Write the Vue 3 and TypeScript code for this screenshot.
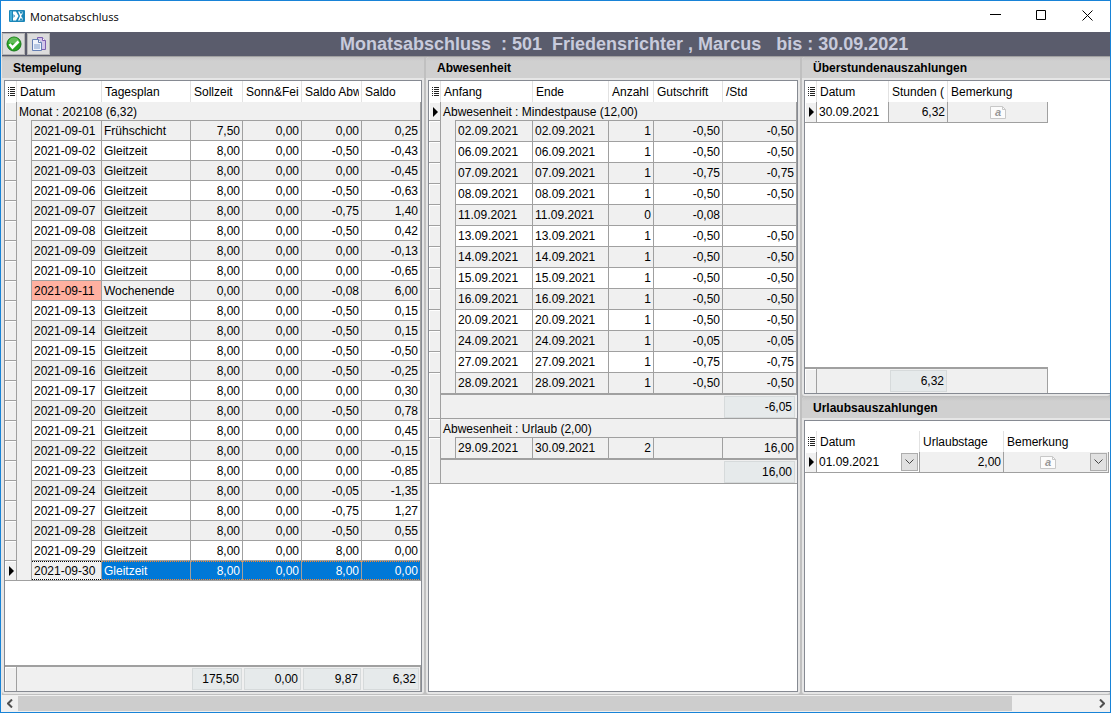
<script setup lang="ts">
import { ref } from 'vue'

interface StampRow {
  date: string
  plan: string
  target: string
  sunday: string
  absence: string
  balance: string
}

interface AbsenceRow {
  from: string
  to: string
  count: string
  credit: string
  hours: string
}

interface AbsenceGroup {
  title: string
  rows: AbsenceRow[]
  sum: string
}

const stamp = (date: string, absence: string, balance: string, plan = 'Gleitzeit', target = '8,00'): StampRow => ({
  date: `2021-09-${date}`, plan, target, sunday: '0,00', absence, balance,
})

const stamps: StampRow[] = [
  stamp('01', '0,00', '0,25', 'Frühschicht', '7,50'),
  stamp('02', '-0,50', '-0,43'),
  stamp('03', '0,00', '-0,45'),
  stamp('06', '-0,50', '-0,63'),
  stamp('07', '-0,75', '1,40'),
  stamp('08', '-0,50', '0,42'),
  stamp('09', '0,00', '-0,13'),
  stamp('10', '0,00', '-0,65'),
  stamp('11', '-0,08', '6,00', 'Wochenende', '0,00'),
  stamp('13', '-0,50', '0,15'),
  stamp('14', '-0,50', '0,15'),
  stamp('15', '-0,50', '-0,50'),
  stamp('16', '-0,50', '-0,25'),
  stamp('17', '0,00', '0,30'),
  stamp('20', '-0,50', '0,78'),
  stamp('21', '0,00', '0,45'),
  stamp('22', '0,00', '-0,15'),
  stamp('23', '0,00', '-0,85'),
  stamp('24', '-0,05', '-1,35'),
  stamp('27', '-0,75', '1,27'),
  stamp('28', '-0,50', '0,55'),
  stamp('29', '8,00', '0,00'),
  stamp('30', '8,00', '0,00'),
]
const selected = ref('2021-09-30')

const pause = (day: string, credit: string, hours = credit, count = '1'): AbsenceRow => ({
  from: `${day}.09.2021`, to: `${day}.09.2021`, count, credit, hours,
})

const groups: AbsenceGroup[] = [
  {
    title: 'Abwesenheit : Mindestpause (12,00)',
    rows: [
      pause('02', '-0,50'),
      pause('06', '-0,50'),
      pause('07', '-0,75'),
      pause('08', '-0,50'),
      pause('11', '-0,08', '', '0'),
      pause('13', '-0,50'),
      pause('14', '-0,50'),
      pause('15', '-0,50'),
      pause('16', '-0,50'),
      pause('20', '-0,50'),
      pause('24', '-0,05'),
      pause('27', '-0,75'),
      pause('28', '-0,50'),
    ],
    sum: '-6,05',
  },
  {
    title: 'Abwesenheit : Urlaub (2,00)',
    rows: [{ from: '29.09.2021', to: '30.09.2021', count: '2', credit: '', hours: '16,00' }],
    sum: '16,00',
  },
]

const payoutDate = ref('01.09.2021')
</script>

<template>
  <div class="window">
    <header class="titlebar">
      <svg class="app-icon" width="16" height="12" viewBox="0 0 16 12" aria-hidden="true">
        <rect width="16" height="12" rx="1" fill="#1a86b8" />
        <path d="M1 1h2v10H1z" fill="#45aed8" />
        <path d="M4 1.500h3L9.500 6 7 10.500H4z" fill="#fff" />
        <path d="M4.500 4L6 6 4.500 8z" fill="#1a86b8" />
        <path d="M9 1.500h4.500v2.500L12 6l1.500 2v2.500H9L11 6z" fill="#fff" />
        <path d="M10.500 1.500L12 4.500 13.500 1.500zM10.500 10.500L12 7.500l1.500 3z" fill="#1a86b8" />
      </svg>
      <span class="caption">Monatsabschluss</span>
      <div class="controls">
        <button type="button" aria-label="Minimieren">
          <svg width="11" height="11" viewBox="0 0 11 11"><path d="M0 4.500h11" stroke="#000" /></svg>
        </button>
        <button type="button" aria-label="Maximieren">
          <svg width="11" height="11" viewBox="0 0 11 11"><path d="M.5 .5h9v9h-9z" fill="none" stroke="#000" /></svg>
        </button>
        <button type="button" aria-label="Schließen">
          <svg width="11" height="11" viewBox="0 0 11 11"><path d="M.5 .5l10 10M10.500 .5l-10 10" stroke="#000" /></svg>
        </button>
      </div>
    </header>

    <div class="toolbar">
      <button type="button" aria-label="Bestätigen">
        <svg width="16" height="16" viewBox="0 0 16 16">
          <circle cx="8" cy="8" r="7" fill="#27a51f" stroke="#17791a" />
          <path d="M2.500 6.500a5.500 5 0 0 1 11 0q-5.500 2-11 0z" fill="#62bd58" />
          <path d="M3.500 8l3 3.500 6-6" fill="none" stroke="#fff" stroke-width="2.600" />
        </svg>
      </button>
      <button type="button" aria-label="Kopieren">
        <svg width="16" height="16" viewBox="0 0 16 16">
          <path d="M6.500 1.500h5l3 3v9h-8z" fill="#d3c6ea" stroke="#7d5fb0" />
          <path d="M11.500 1.500v3h3" fill="#fff" stroke="#7d5fb0" />
          <path d="M1.500 3.500h6l3 3v8h-9z" fill="#eef3fb" stroke="#6580b4" />
          <path d="M7.500 3.500v3h3" fill="#fff" stroke="#6580b4" />
          <path d="M3 8h6v5H3z" fill="#b6c8e4" />
        </svg>
      </button>
      <h1>Monatsabschluss&nbsp; : 501&nbsp; Friedensrichter , Marcus&nbsp;&nbsp; bis : 30.09.2021</h1>
    </div>

    <main class="workspace">
      <section class="panel">
        <h2>Stempelung</h2>
        <div class="box">
          <table class="grid stamps">
            <colgroup>
              <col class="w12" /><col class="w15" /><col class="w70" /><col class="w89" />
              <col class="w52" /><col class="w59" /><col class="w60" /><col />
            </colgroup>
            <thead>
              <tr>
                <th class="mark"><i class="list"></i></th>
                <th colspan="2">Datum</th>
                <th>Tagesplan</th>
                <th>Sollzeit</th>
                <th>Sonn&amp;Fei</th>
                <th><span class="clip">Saldo Abw</span></th>
                <th>Saldo</th>
              </tr>
            </thead>
            <tbody>
              <tr class="group">
                <td class="mark first"></td>
                <td colspan="7">Monat : 202108 (6,32)</td>
              </tr>
              <tr
                v-for="row in stamps"
                :key="row.date"
                :class="{ selected: row.date === selected }"
                @click="selected = row.date"
              >
                <td class="mark"><i v-if="row.date === selected" class="arrow"></i></td>
                <td class="indent"></td>
                <td class="date" :class="{ weekend: row.plan === 'Wochenende' }">{{ row.date }}</td>
                <td>{{ row.plan }}</td>
                <td class="num">{{ row.target }}</td>
                <td class="num">{{ row.sunday }}</td>
                <td class="num">{{ row.absence }}</td>
                <td class="num">{{ row.balance }}</td>
              </tr>
            </tbody>
          </table>
          <table class="totals">
            <colgroup>
              <col class="w12" /><col class="w174" />
              <col class="w52" /><col class="w59" /><col class="w60" /><col />
            </colgroup>
            <tbody>
              <tr>
                <td class="mark first"></td>
                <td></td>
                <td><span class="sum">175,50</span></td>
                <td><span class="sum">0,00</span></td>
                <td><span class="sum">9,87</span></td>
                <td><span class="sum">6,32</span></td>
              </tr>
            </tbody>
          </table>
        </div>
      </section>

      <section class="panel">
        <h2>Abwesenheit</h2>
        <div class="box">
          <table class="grid absences">
            <colgroup>
              <col class="w12" /><col class="w15" /><col class="w77" /><col class="w76" />
              <col class="w45" /><col class="w69" /><col />
            </colgroup>
            <thead>
              <tr>
                <th class="mark"><i class="list"></i></th>
                <th colspan="2">Anfang</th>
                <th>Ende</th>
                <th>Anzahl</th>
                <th>Gutschrift</th>
                <th>/Std</th>
              </tr>
            </thead>
            <tbody v-for="(group, g) in groups" :key="group.title">
              <tr class="group" :class="{ next: g > 0 }">
                <td class="mark" :class="{ first: g === 0 }"><i v-if="g === 0" class="arrow"></i></td>
                <td colspan="6">{{ group.title }}</td>
              </tr>
              <tr v-for="(row, i) in group.rows" :key="row.from">
                <td class="mark" :rowspan="i === group.rows.length - 1 ? 2 : 1"></td>
                <td class="indent"></td>
                <td>{{ row.from }}</td>
                <td>{{ row.to }}</td>
                <td class="num">{{ row.count }}</td>
                <td class="num">{{ row.credit }}</td>
                <td class="num">{{ row.hours }}</td>
              </tr>
              <tr class="subtotal">
                <td colspan="5"></td>
                <td><span class="sum">{{ group.sum }}</span></td>
              </tr>
            </tbody>
          </table>
        </div>
      </section>

      <div class="side">
        <section class="panel open">
          <h2>Überstundenauszahlungen</h2>
          <div class="box">
            <table class="grid payout overtime">
              <colgroup>
                <col class="w12" /><col class="w72" /><col class="w59" /><col class="w100" />
              </colgroup>
              <thead>
                <tr>
                  <th class="mark"><i class="list"></i></th>
                  <th>Datum</th>
                  <th>Stunden (</th>
                  <th>Bemerkung</th>
                </tr>
              </thead>
              <tbody>
                <tr>
                  <td class="mark first"><i class="arrow"></i></td>
                  <td class="active">30.09.2021</td>
                  <td class="num">6,32</td>
                  <td class="center">
                    <svg class="note" width="16" height="13" viewBox="0 0 16 13" role="img" aria-label="Notiz">
                      <path d="M.5 .5h12l3 3v9H.5z" fill="#fcfcfc" stroke="#c8c8c8" />
                      <path d="M12.500 .5v3h3" fill="none" stroke="#c8c8c8" />
                      <text x="5" y="10" class="glyph">a</text>
                    </svg>
                  </td>
                </tr>
              </tbody>
            </table>
            <table class="totals overtime">
              <colgroup>
                <col class="w12" /><col class="w72" /><col class="w59" /><col />
              </colgroup>
              <tbody>
                <tr>
                  <td class="mark first"></td>
                  <td></td>
                  <td><span class="sum">6,32</span></td>
                  <td></td>
                </tr>
              </tbody>
            </table>
          </div>
        </section>

        <section class="panel open">
          <h2>Urlaubsauszahlungen</h2>
          <div class="box spaced">
            <table class="grid payout vacation">
              <colgroup>
                <col class="w12" /><col class="w103" /><col class="w84" /><col class="w105" />
              </colgroup>
              <thead>
                <tr>
                  <th class="mark"><i class="list"></i></th>
                  <th>Datum</th>
                  <th>Urlaubstage</th>
                  <th>Bemerkung</th>
                </tr>
              </thead>
              <tbody>
                <tr>
                  <td class="mark first"><i class="arrow"></i></td>
                  <td class="active">
                    <div class="combo">
                      <input v-model="payoutDate" type="text" aria-label="Datum" />
                      <button type="button" aria-label="Datum wählen">
                        <svg width="9" height="6" viewBox="0 0 9 6"><path d="M.5 .5l4 4 4-4" fill="none" stroke="#444" /></svg>
                      </button>
                    </div>
                  </td>
                  <td class="num">2,00</td>
                  <td>
                    <div class="combo">
                      <span class="fill">
                        <svg class="note" width="16" height="13" viewBox="0 0 16 13" role="img" aria-label="Notiz">
                          <path d="M.5 .5h12l3 3v9H.5z" fill="#fcfcfc" stroke="#c8c8c8" />
                          <path d="M12.500 .5v3h3" fill="none" stroke="#c8c8c8" />
                          <text x="5" y="10" class="glyph">a</text>
                        </svg>
                      </span>
                      <button type="button" aria-label="Bemerkung öffnen">
                        <svg width="9" height="6" viewBox="0 0 9 6"><path d="M.5 .5l4 4 4-4" fill="none" stroke="#444" /></svg>
                      </button>
                    </div>
                  </td>
                </tr>
              </tbody>
            </table>
          </div>
        </section>
      </div>
    </main>

    <div class="scrollbar">
      <button type="button" aria-label="Nach links">
        <svg width="6" height="9" viewBox="0 0 6 9"><path d="M5 .5l-4 4 4 4" fill="none" stroke="#505050" stroke-width="2" /></svg>
      </button>
      <div class="track"><div class="thumb"></div></div>
      <button type="button" aria-label="Nach rechts">
        <svg width="6" height="9" viewBox="0 0 6 9"><path d="M1 .5l4 4-4 4" fill="none" stroke="#505050" stroke-width="2" /></svg>
      </button>
    </div>
  </div>
</template>

<style>
body {
  margin: 0;
}
</style>

<style scoped>
.window {
  --line: #a0a0a0;
  --face: #f0f0f0;
  box-sizing: border-box;
  height: 100vh;
  display: flex;
  flex-direction: column;
  overflow: hidden;
  border: 1px solid #1883d7;
  background: #e6e6e6;
  color: #000;
  font: 12px/16px "Liberation Sans", Arial, sans-serif;
}

button {
  display: flex;
  align-items: center;
  justify-content: center;
  box-sizing: border-box;
  padding: 0;
  border: 0;
  background: none;
}

.titlebar {
  flex: none;
  display: flex;
  align-items: center;
  height: 31px;
  padding-left: 8px;
  background: #fff;
}

.app-icon {
  margin-bottom: 2px;
}

.caption {
  margin-left: 5px;
  font-family: "Open Sans", "Noto Sans", sans-serif;
  font-size: 11px;
}

.controls {
  display: flex;
  align-self: stretch;
  margin-left: auto;
}

.controls button {
  width: 46px;
  height: 29px;
}

.toolbar {
  flex: none;
  display: flex;
  align-items: center;
  gap: 2px;
  height: 24px;
  margin-left: 1px;
  background: #5a5c6c;
}

.toolbar button {
  flex: none;
  width: 23px;
  height: 22px;
  border: 1px solid #b4b4b4;
  background: #dcdcdc;
}

.toolbar h1 {
  margin: 0 0 0 288px;
  color: #c8cbdc;
  font-size: 18px;
  line-height: 24px;
  white-space: nowrap;
}

.workspace {
  flex: 1;
  min-height: 0;
  display: grid;
  grid-template-columns: minmax(0, 422fr) minmax(0, 374fr) minmax(0, 308fr);
  grid-template-rows: minmax(0, 1fr);
  column-gap: 2px;
  margin-left: 1px;
  padding-bottom: 1px;
  border-top: 1px solid #a0a0a0;
  background: #c0c0c0;
}

.side {
  display: grid;
  grid-template-rows: minmax(0, 339fr) minmax(0, 297fr);
  row-gap: 1px;
}

.panel {
  display: flex;
  flex-direction: column;
  min-height: 0;
  padding-bottom: 2px;
  border-radius: 3px;
  background: #e6e6e6;
}

.panel h2 {
  flex: none;
  margin: 0 0 2px;
  padding: 1px 0 0 11px;
  border-radius: 3px 0 0;
  background: linear-gradient(#c4c4c4, #d0d0d0 4px);
  font-size: 12px;
  line-height: 20px;
}

.box {
  flex: 1;
  min-height: 0;
  display: flex;
  flex-direction: column;
  margin: 0 2px;
  overflow: hidden;
  border: 1px solid #868a92;
  background: #fff;
}

.open .box {
  margin-right: 0;
  border-right: 0;
}

.spaced {
  padding-top: 10px;
}

table {
  width: 100%;
  table-layout: fixed;
  border-collapse: separate;
  border-spacing: 0;
}

.w12 { width: 12px; }
.w15 { width: 15px; }
.w45 { width: 45px; }
.w52 { width: 52px; }
.w59 { width: 59px; }
.w60 { width: 60px; }
.w69 { width: 69px; }
.w70 { width: 70px; }
.w72 { width: 72px; }
.w76 { width: 76px; }
.w77 { width: 77px; }
.w84 { width: 84px; }
.w89 { width: 89px; }
.w100 { width: 100px; }
.w103 { width: 103px; }
.w105 { width: 105px; }
.w174 { width: 174px; }

.overtime {
  box-sizing: border-box;
  width: 243px;
}

.vacation {
  width: 304px;
}

th,
td {
  box-sizing: border-box;
  padding: 0 2px;
  overflow: hidden;
  white-space: nowrap;
  vertical-align: middle;
}

.grid th {
  height: 21px;
  padding: 0 0 0 3px;
  border-right: 1px solid #e2e2e2;
  font-weight: normal;
  text-align: left;
}

.stamps th:last-child,
.absences th:last-child,
.payout th:last-child {
  border-right-color: #fff;
}

.clip {
  display: block;
  margin-right: 2px;
  overflow: hidden;
}

.grid td {
  height: 20px;
  border-top: 1px solid var(--line);
  border-right: 1px solid var(--line);
}

.absences td {
  height: 21px;
}

.grid .group td {
  height: 18px;
  padding-top: 1px;
  border-top: 0;
  background: var(--face);
}

.absences .group.next td {
  height: 19px;
  border-top: 1px solid var(--line);
}

.stamps tr:nth-child(even) td,
.absences tr:nth-child(even) td {
  background: var(--face);
}

.stamps tbody tr:last-child td {
  border-bottom: 1px solid var(--line);
}

.grid .indent {
  border-top: 0;
  background: var(--face);
}

.grid .mark,
.totals .mark {
  padding: 0;
  border-right: 1px solid var(--line);
  background: var(--face);
  box-shadow: inset 1px 1px #fff;
}

.grid th.mark {
  border-right-color: #e2e2e2;
  background: #fff;
}

.grid .first {
  border-top: 0;
}

.num {
  text-align: right;
}

.center {
  text-align: center;
}

.stamps tr .weekend.date {
  background: #ffb0a0;
}

.stamps .selected td {
  height: 21px;
}

.stamps .selected td:not(.mark):not(.indent) {
  --dot: #ff8728;
  background:
    repeating-linear-gradient(90deg, var(--dot) 0 1px, transparent 1px 2px) 0 0 / 100% 1px no-repeat,
    repeating-linear-gradient(90deg, var(--dot) 0 1px, transparent 1px 2px) 0 100% / 100% 1px no-repeat,
    #0078d7;
  background-origin: padding-box;
  color: #fff;
}

.stamps .selected td.date:not(.mark):not(.indent) {
  --dot: #000;
  background-color: var(--face);
  color: #000;
}

.list {
  display: block;
  width: 7px;
  height: 9px;
  margin-left: 3px;
  background:
    linear-gradient(90deg, transparent 1px, #fff 1px 2px, transparent 2px),
    repeating-linear-gradient(#222 0 1px, #fff 1px 2px);
}

.arrow {
  display: block;
  width: 0;
  margin-left: 4px;
  border: 5px solid transparent;
  border-left: 5px solid #000;
  border-right: 0;
}

.absences .subtotal td {
  height: 25px;
  padding: 1px 1px 0;
  border-top: 2px solid var(--line);
  border-right: 0;
  background: var(--face);
}

.absences tbody:last-child .subtotal td,
.absences tbody:last-child td[rowspan="2"] {
  border-bottom: 1px solid var(--line);
}

.totals td {
  padding: 1px;
}

.absences .subtotal td:last-child {
  padding-right: 2px;
}

.totals {
  margin-top: auto;
  border-top: 2px solid var(--line);
  border-right: 1px solid var(--line);
  background: var(--face);
}

.totals td {
  height: 24px;
}

.sum {
  display: block;
  padding: 2px;
  border: 1px solid #d6dadb;
  background: #e6eaeb;
  text-align: right;
}

.payout tbody td {
  height: 21px;
  border-top: 0;
  border-bottom: 1px solid var(--line);
  background: var(--face);
}

.payout tbody .active {
  background: #fff;
}

.vacation tbody td:has(.combo) {
  padding-right: 0;
}

.combo {
  display: flex;
  align-items: center;
  height: 20px;
}

.combo input {
  flex: 1;
  min-width: 0;
  padding: 0;
  border: 0;
  outline: 0;
  background: none;
  color: inherit;
  font: inherit;
}

.combo .fill {
  flex: 1;
  text-align: center;
}

.combo button {
  flex: none;
  width: 17px;
  height: 18px;
  margin-right: 1px;
  border: 1px solid #adadad;
  background: #e1e1e1;
}

.note {
  display: inline-block;
  vertical-align: middle;
}

.glyph {
  fill: #989898;
  font: italic bold 11px "Liberation Sans", sans-serif;
}

.scrollbar {
  flex: none;
  display: flex;
  height: 17px;
  background: var(--face);
}

.scrollbar button {
  width: 17px;
  height: 17px;
}

.track {
  flex: 1;
}

.thumb {
  width: 92.500%;
  height: 15px;
  margin-top: 1px;
  background: #cdcdcd;
}
</style>
